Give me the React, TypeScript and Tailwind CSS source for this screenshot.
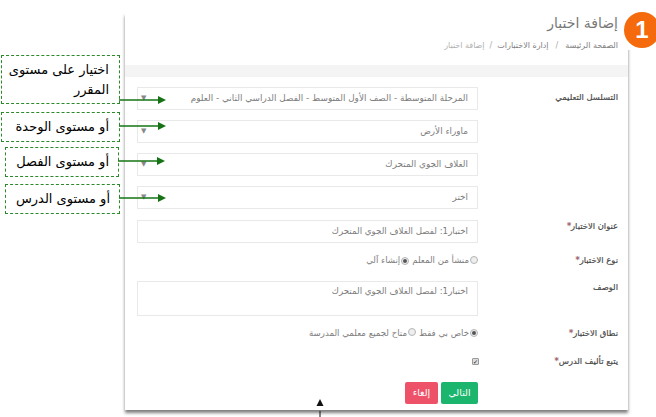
// Quiz form screenshot with annotation boxes over it
const notes = [
  { text: "اختيار على مستوى المقرر", box: "left-[1px] top-[55px] w-[119px] h-[49px] pr-[10px] pl-0", arrow: "left-[119px] top-[95px]" },
  { text: "أو مستوى الوحدة", box: "left-[1px] top-[112px] w-[119px] h-[30px] pr-[10px]", arrow: "left-[119px] top-[121px]" },
  { text: "أو مستوى الفصل", box: "left-[5px] top-[147px] w-[114px] h-[30px] pr-[9px]", arrow: "left-[118px] top-[156px]" },
  { text: "أو مستوى الدرس", box: "left-[5px] top-[184px] w-[115px] h-[30px] pr-[9px]", arrow: "left-[119px] top-[193px]" },
];

const selects = [
  "المرحلة المتوسطة - الصف الأول المتوسط - الفصل الدراسي الثاني - العلوم",
  "ماوراء الأرض",
  "الغلاف الجوي المتحرك",
  "اختر",
];

function Select({ value }: { value: string }) {
  return (
    <div className="flex h-[23px] items-center justify-between border border-[#e9e9e9] pl-[10px] pr-[9px] text-[8.85px] text-[#7d7d7d]">
      <span>{value}</span>
      <span className="ml-[-7px] text-[7px] text-[#888]">▼</span>
    </div>
  );
}

function Radio({ checked }: { checked?: boolean }) {
  return (
    <span className="inline-flex size-[8px] items-center justify-center rounded-full border border-[#b5b5b5] bg-[#eee]">
      {checked && <span className="size-[4px] rounded-full bg-[#555]" />}
    </span>
  );
}

function Label({ text, required }: { text: string; required?: boolean }) {
  return (
    <div className="w-[140px] shrink-0 text-[8.4px] font-medium text-[#444] [-webkit-text-stroke:0.2px_#555]">
      {text}
      {required && <span className="text-[#e8485f]">*</span>}
    </div>
  );
}

export default function App() {
  return (
    <div dir="rtl" className="relative h-[417px] w-[656px] overflow-hidden bg-white font-['DejaVu_Sans',sans-serif]">
      <div className="mr-[28px] mt-[13px] h-[397px] w-[503px] bg-white shadow-[0_3px_3px_0_rgba(0,0,0,0.5)]">
        <div className="h-[52px] pr-[10px]">
          <h1 className="text-[14px] leading-[20px] text-[#777]">إضافة اختبار</h1>
          <div className="mt-[7px] flex items-center gap-[5px] text-[8px] text-[#808080]">
            <span>الصفحة الرئيسة</span>
            <span className="mx-[2px] text-[#aaa]">/</span>
            <span>إدارة الاختبارات</span>
            <span className="text-[#aaa]">/</span>
            <span className="text-[#b0b0b0]">إضافة اختبار</span>
          </div>
        </div>
        <div className="h-[12px] bg-[#f4f4f4]" />

        <div className="pr-[10px] pt-[10px]">
          <div className="flex">
            <div className="w-[140px] shrink-0 pt-[4px] text-[8.4px] font-medium text-[#444] [-webkit-text-stroke:0.2px_#555]">التسلسل التعليمي</div>
            <div className="flex w-[341px] flex-col gap-[10px]">
              {selects.map((s) => (
                <Select key={s} value={s} />
              ))}
            </div>
          </div>

          <div className="mt-[11px] flex">
            <Label text="عنوان الاختبار" required />
            <div className="flex h-[23px] w-[341px] items-center border border-[#e9e9e9] px-[9px] text-[8.7px] text-[#7d7d7d]">
              اختبار1: لفصل الغلاف الجوي المتحرك
            </div>
          </div>

          <div className="mt-[10px] flex h-[15px] items-center">
            <Label text="نوع الاختبار" required />
            <div className="flex items-center gap-[1px] text-[8.6px] text-[#7d7d7d]">
              <Radio />
              <span>منشأ من المعلم</span>
              <span className="mr-[2px]"><Radio checked /></span>
              <span>إنشاء آلي</span>
            </div>
          </div>

          <div className="mt-[13px] flex">
            <Label text="الوصف" />
            <div className="h-[35px] w-[341px] border border-[#e9e9e9] px-[9px] pt-[3px] text-[8.7px] text-[#7d7d7d]">
              اختبار1: لفصل الغلاف الجوي المتحرك
            </div>
          </div>

          <div className="mt-[10px] flex h-[15px] items-center">
            <Label text="نطاق الاختبار" required />
            <div className="flex items-center gap-[1px] text-[8.6px] text-[#7d7d7d]">
              <Radio checked />
              <span>خاص بي فقط</span>
              <span className="mr-[2px]"><Radio /></span>
              <span>متاح لجميع معلمي المدرسة</span>
            </div>
          </div>

          <div className="mt-[13px] flex h-[15px] items-center">
            <Label text="يتبع تأليف الدرس" required />
            <span className="mr-[-1px] flex size-[7px] items-center justify-center rounded-[1px] border border-[#999] bg-[#ddd] text-[6px] font-bold leading-none text-[#111]">✓</span>
          </div>

          <div className="mr-[140px] mt-[13px] flex gap-[3px]">
            <button className="h-[22px] w-[37px] rounded-[2px] bg-[#1cb56d] text-[9.5px] text-white">التالي</button>
            <button className="h-[22px] w-[33px] rounded-[2px] bg-[#ee5269] text-[9.5px] text-white">إلغاء</button>
          </div>
        </div>
      </div>

      {/* hides the panel's right shadow next to the heading */}
      <div className="absolute left-[628px] top-[10px] h-[40px] w-[6px] bg-white" />

      {/* step badge */}
      <div className="absolute left-[624px] top-[12px] flex size-[36px] items-center justify-center rounded-full bg-[#f46a0c] font-['Liberation_Sans',sans-serif] text-[24px] font-bold text-white">
        1
      </div>

      {notes.map((n) => (
        <div key={n.text}>
          <div className={`absolute flex items-center border border-dashed border-[#2a8a2a] bg-white text-[13px] leading-[20px] text-black ${n.box}`}>
            {n.text}
          </div>
          <svg className={`absolute ${n.arrow}`} width="48" height="10" viewBox="0 0 48 10">
            <path d="M0 5H40" stroke="#157315" strokeWidth="1.4" />
            <path d="M39 1l8 4-8 4z" fill="#157315" />
          </svg>
        </div>
      ))}

      {/* black marker under the panel */}
      <svg className="absolute left-[316px] top-[399px]" width="8" height="18" viewBox="0 0 8 18">
        <path d="M4 0l3.5 7h-7z" fill="#111" />
        <path d="M4 12V18" stroke="#111" strokeWidth="1" />
      </svg>
    </div>
  );
}
